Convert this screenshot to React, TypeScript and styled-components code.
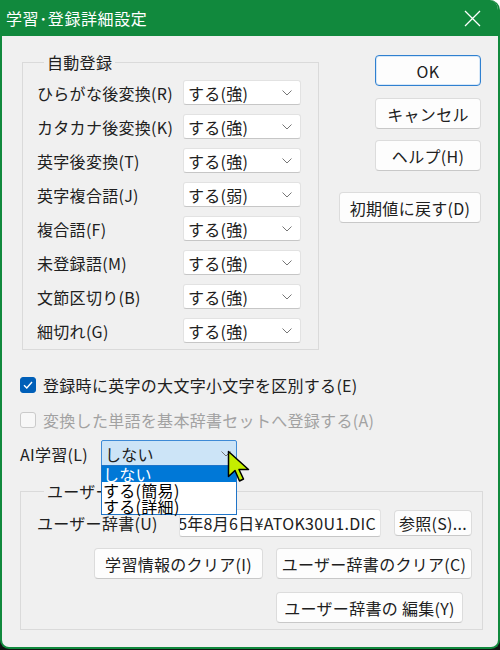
import styled, { createGlobalStyle } from "styled-components";

const GREEN = "#11893d";

const GlobalStyle = createGlobalStyle`
  html, body {
    margin: 0;
    padding: 0;
    width: 500px;
    height: 650px;
    overflow: hidden;
    background: linear-gradient(to bottom, #ffffff 50%, #121212 50%);
  }
  body {
    font-family: "Noto Sans CJK JP", "Noto Sans", sans-serif;
    color: #202020;
  }
`;

const autoRows = [
  { label: "ひらがな後変換(R)", value: "する(強)" },
  { label: "カタカナ後変換(K)", value: "する(強)" },
  { label: "英字後変換(T)", value: "する(強)" },
  { label: "英字複合語(J)", value: "する(弱)" },
  { label: "複合語(F)", value: "する(強)" },
  { label: "未登録語(M)", value: "する(強)" },
  { label: "文節区切り(B)", value: "する(強)" },
  { label: "細切れ(G)", value: "する(強)" },
];

const aiOptions = ["しない", "する(簡易)", "する(詳細)"];

const Chevron = () => (
  <svg width="10" height="6" viewBox="0 0 10 6">
    <path d="M0.5 0.5 L5 5 L9.5 0.5" fill="none" stroke="#767676" strokeWidth="1" />
  </svg>
);

const CloseIcon = () => (
  <svg width="17" height="17" viewBox="0 0 17 17">
    <path d="M1 1 L16 16 M16 1 L1 16" stroke="#ffffff" strokeWidth="1.3" fill="none" />
  </svg>
);

const CheckIcon = () => (
  <svg width="10" height="8" viewBox="0 0 10 8">
    <path d="M1 4.2 L3.8 7 L9 1" fill="none" stroke="#ffffff" strokeWidth="1.4" />
  </svg>
);

const Pointer = () => (
  <svg width="25" height="34" viewBox="0 0 25 34">
    <path
      d="M1.5 1.5 L1.5 26.5 L8 20.5 L12.5 31 L16.5 29 L12 19.5 L21.5 19.5 Z"
      fill="#c4ee00"
      stroke="#000000"
      strokeWidth="1.5"
      strokeLinejoin="round"
    />
  </svg>
);

export default function App() {
  return (
    <>
      <GlobalStyle />
      <Window>
        <TitleBar>
          <span>学習･登録詳細設定</span>
          <CloseIcon />
        </TitleBar>

        <Body>
          <TopSection>
            <Group $width={297}>
              <Legend>自動登録</Legend>
              <AutoList>
                {autoRows.map((row) => (
                  <AutoRow key={row.label}>
                    <RowLabel $width={146}>{row.label}</RowLabel>
                    <Combo $width={118}>
                      <span>{row.value}</span>
                      <Chevron />
                    </Combo>
                  </AutoRow>
                ))}
              </AutoList>
            </Group>

            <ButtonColumn>
              <DialogButton $width={106} $default>OK</DialogButton>
              <DialogButton $width={106} $gap={12}>キャンセル</DialogButton>
              <DialogButton $width={106} $gap={11}>ヘルプ(H)</DialogButton>
              <DialogButton $width={142} $gap={21}>初期値に戻す(D)</DialogButton>
            </ButtonColumn>
          </TopSection>

          <CheckList>
            <CheckRow>
              <CheckBox $checked>
                <CheckIcon />
              </CheckBox>
              <span>登録時に英字の大文字小文字を区別する(E)</span>
            </CheckRow>
            <CheckRow $disabled>
              <CheckBox />
              <span>変換した単語を基本辞書セットへ登録する(A)</span>
            </CheckRow>
          </CheckList>

          <AiRow>
            <AiLabel>AI学習(L)</AiLabel>
            <AiCombo>
              <span>しない</span>
              <Chevron />
              <DropList>
                {aiOptions.map((opt, i) => (
                  <DropItem key={opt} $selected={i === 0}>
                    {opt}
                  </DropItem>
                ))}
              </DropList>
            </AiCombo>
          </AiRow>

          <Group $width={463} $userGroup>
            <Legend>ユーザー辞書</Legend>
            <UserContent>
              <UserRow>
                <RowLabel $width={129}>ユーザー辞書(U)</RowLabel>
                <PathField>
                  <span>C:¥Users¥user¥Documents¥ATOK¥2025年8月6日¥ATOK30U1.DIC</span>
                </PathField>
                <DialogButton $width={78} $height={26}>参照(S)...</DialogButton>
              </UserRow>
              <UserRow $indent={57}>
                <DialogButton $width={169}>学習情報のクリア(I)</DialogButton>
                <DialogButton $width={196}>ユーザー辞書のクリア(C)</DialogButton>
              </UserRow>
              <UserRow $indent={239}>
                <DialogButton $width={187}>ユーザー辞書の 編集(Y)</DialogButton>
              </UserRow>
            </UserContent>
          </Group>
        </Body>

        <CursorLayer>
          <Pointer />
        </CursorLayer>
      </Window>
    </>
  );
}

const Window = styled.div`
  box-sizing: border-box;
  position: relative;
  width: 500px;
  height: 649px;
  display: flex;
  flex-direction: column;
  background: #f0f0f0;
  border: 2px solid ${GREEN};
  border-top: 0;
  border-radius: 0 10px 9px 9px;
  overflow: hidden;
  font-size: 16px;
  letter-spacing: 0.3px;
`;

const TitleBar = styled.div`
  height: 36px;
  flex: none;
  display: flex;
  align-items: center;
  justify-content: space-between;
  padding: 0 19px 0 6px;
  margin: 0 -2px;
  background: ${GREEN};
  color: #ffffff;
  font-size: 16px;
  letter-spacing: 0.6px;
`;

const Body = styled.div`
  display: flex;
  flex-direction: column;
  padding: 16px 17px 0 18px;
`;

const TopSection = styled.div`
  display: flex;
  align-items: flex-start;
`;

const Group = styled.fieldset<{ $width: number; $userGroup?: boolean }>`
  box-sizing: border-box;
  width: ${({ $width }) => $width}px;
  margin: ${({ $userGroup }) => ($userGroup ? "14px 0 0 0" : "0 0 0 2px")};
  padding: ${({ $userGroup }) => ($userGroup ? "8px 10px 6px 16px" : "8px 10px 6px 14px")};
  border: 1px solid #dadada;
  border-radius: 0;
  min-width: 0;
`;

const Legend = styled.legend`
  margin-left: 7px;
  padding: 0 3px;
  height: 20px;
  line-height: 20px;
  font-size: 16px;
`;

const AutoList = styled.div`
  display: flex;
  flex-direction: column;
  gap: 9px;
`;

const AutoRow = styled.div`
  display: flex;
  align-items: center;
  height: 25px;
`;

const RowLabel = styled.span<{ $width: number }>`
  flex: none;
  width: ${({ $width }) => $width}px;
  white-space: nowrap;
  line-height: 20px;
`;

const Combo = styled.div<{ $width: number }>`
  box-sizing: border-box;
  width: ${({ $width }) => $width}px;
  height: 25px;
  display: flex;
  align-items: center;
  justify-content: space-between;
  padding: 0 8px 0 4px;
  background: #ffffff;
  border: 1px solid #e2e2e2;
  border-bottom-color: #c6c6c6;
  border-radius: 3px;
  white-space: nowrap;
`;

const ButtonColumn = styled.div`
  margin-left: auto;
  margin-top: 3px;
  display: flex;
  flex-direction: column;
  align-items: flex-end;
`;

const DialogButton = styled.div<{
  $width: number;
  $height?: number;
  $gap?: number;
  $default?: boolean;
}>`
  box-sizing: border-box;
  flex: none;
  width: ${({ $width }) => $width}px;
  height: ${({ $height }) => $height ?? 31}px;
  margin-top: ${({ $gap }) => $gap ?? 0}px;
  display: flex;
  align-items: center;
  justify-content: center;
  background: #fdfdfd;
  border: 1px solid ${({ $default }) => ($default ? "#2f80d0" : "#dcdcdc")};
  border-bottom-color: ${({ $default }) => ($default ? "#2f80d0" : "#c8c8c8")};
  box-shadow: ${({ $default }) => ($default ? "inset 0 0 0 1px #d7e8f8" : "none")};
  border-radius: 4px;
  white-space: nowrap;
  font-size: 16px;
`;

const CheckList = styled.div`
  display: flex;
  flex-direction: column;
  gap: 15px;
  margin-top: 25px;
`;

const CheckRow = styled.div<{ $disabled?: boolean }>`
  display: flex;
  align-items: center;
  gap: 7px;
  height: 20px;
  color: ${({ $disabled }) => ($disabled ? "#a2a2a2" : "#202020")};
  white-space: nowrap;
`;

const CheckBox = styled.div<{ $checked?: boolean }>`
  box-sizing: border-box;
  width: 16px;
  height: 16px;
  display: flex;
  align-items: center;
  justify-content: center;
  border-radius: 3px;
  background: ${({ $checked }) => ($checked ? "#005fb8" : "#f7f7f7")};
  border: 1px solid ${({ $checked }) => ($checked ? "#005fb8" : "#cacaca")};
`;

const AiRow = styled.div`
  display: flex;
  align-items: center;
  margin-top: 10px;
  height: 27px;
`;

const AiLabel = styled.span`
  width: 81px;
  white-space: nowrap;
`;

const AiCombo = styled.div`
  box-sizing: border-box;
  position: relative;
  width: 136px;
  height: 27px;
  display: flex;
  align-items: center;
  justify-content: space-between;
  padding: 0 5px 0 3px;
  background: #cce4f7;
  border: 1px solid #3d8ad6;
  border-radius: 2px;
`;

const DropList = styled.div`
  box-sizing: border-box;
  position: absolute;
  top: 24px;
  left: -1px;
  width: 136px;
  z-index: 2;
  background: #ffffff;
  border: 1px solid #1f74c8;
`;

const DropItem = styled.div<{ $selected?: boolean }>`
  height: 16px;
  line-height: 16px;
  padding-left: 1px;
  font-size: 16px;
  white-space: nowrap;
  background: ${({ $selected }) => ($selected ? "#0078d7" : "transparent")};
  color: ${({ $selected }) => ($selected ? "#ffffff" : "#000000")};
`;

const UserContent = styled.div`
  display: flex;
  flex-direction: column;
`;

const UserRow = styled.div<{ $indent?: number }>`
  display: flex;
  align-items: center;
  gap: 13px;
  padding-left: ${({ $indent }) => $indent ?? 0}px;
  & + & {
    margin-top: 11px;
  }
  &:last-child {
    margin-top: 13px;
  }
`;

const PathField = styled.div`
  box-sizing: border-box;
  width: 206px;
  height: 28px;
  display: flex;
  align-items: center;
  justify-content: flex-end;
  overflow: hidden;
  padding-right: 4px;
  background: #ffffff;
  border: 1px solid #e2e2e2;
  border-bottom-color: #c6c6c6;
  border-radius: 3px;
  white-space: nowrap;
`;

const CursorLayer = styled.div`
  position: absolute;
  left: 225px;
  top: 450px;
  z-index: 5;
  line-height: 0;
`;
